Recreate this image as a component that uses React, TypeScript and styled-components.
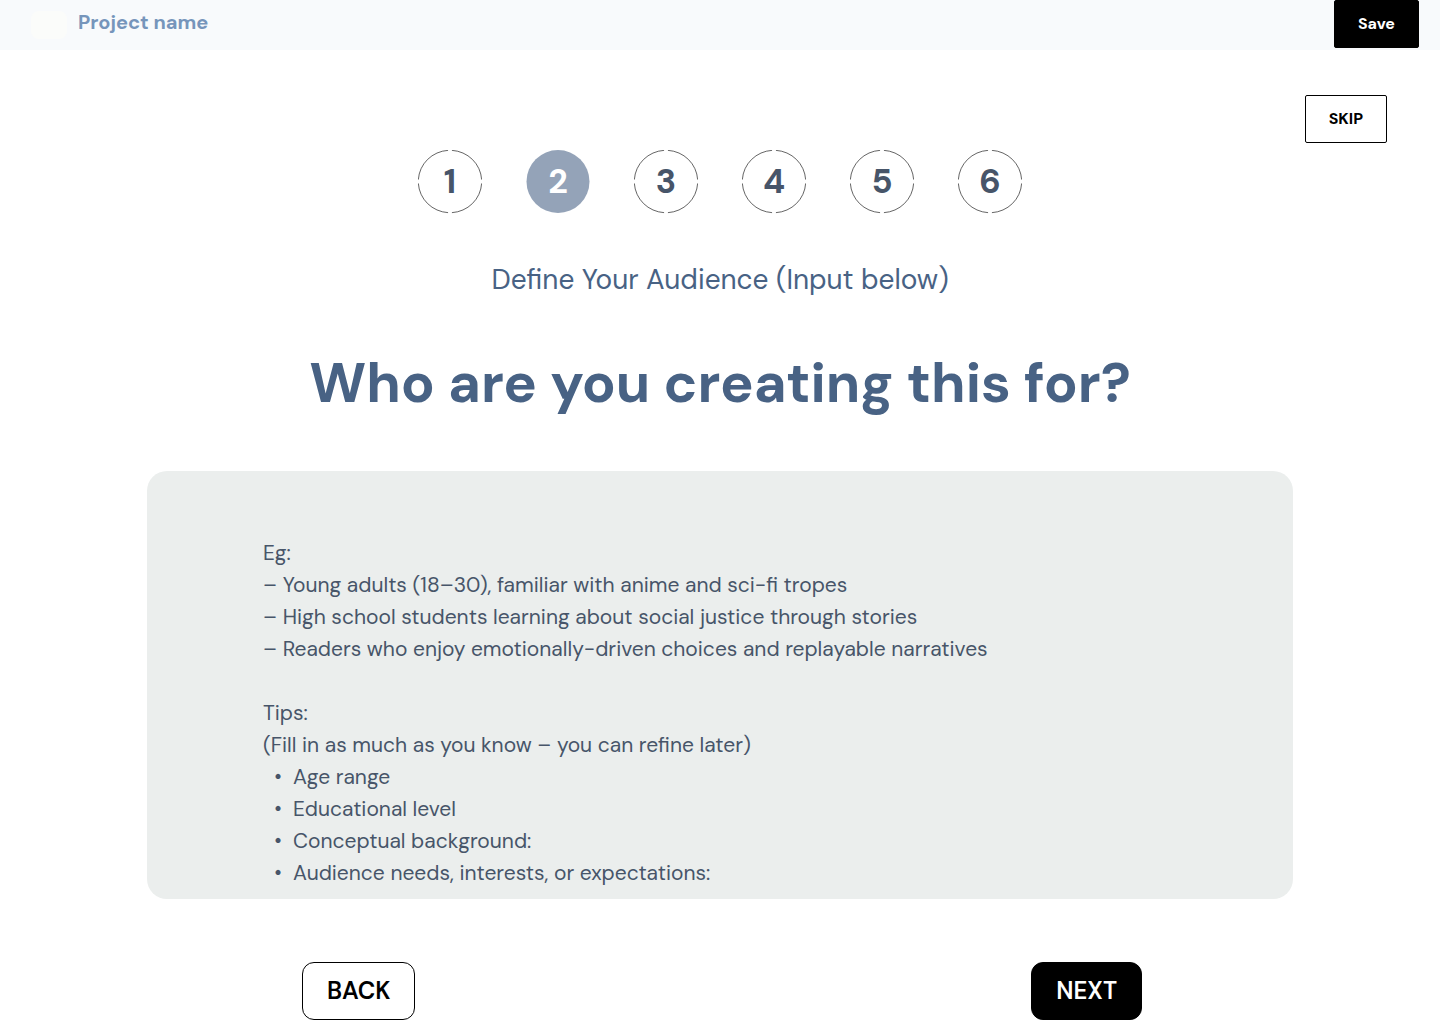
import React, { useState } from "react";
import styled, { createGlobalStyle } from "styled-components";

const GlobalStyle = createGlobalStyle`
  *, *::before, *::after { box-sizing: border-box; }
  body {
    margin: 0;
    background: #fff;
    font-family: "DM Sans", Inter, "Liberation Sans", sans-serif;
  }
  button, textarea { font: inherit; }
`;

const Header = styled.header`
  display: flex;
  align-items: flex-start;
  justify-content: space-between;
  height: 50px;
  padding: 0 21px 0 31px;
  background: #f8fafc;
`;

const Brand = styled.div`
  display: flex;
  align-items: center;
  gap: 11px;
`;

const Logo = styled.span`
  width: 36px;
  height: 28px;
  margin-top: 6px;
  border-radius: 8px;
  background: #fbfcfa;
`;

const ProjectName = styled.span`
  color: #7695bb;
  font-size: 20px;
  font-weight: 700;
  line-height: 44px;
`;

const Button = styled.button<{ $filled?: boolean; $large?: boolean }>`
  height: ${(p) => (p.$large ? 58 : 48)}px;
  padding: 0 ${(p) => (p.$large ? 24 : 23)}px 2px;
  border: 1px solid #000;
  border-radius: ${(p) => (p.$large ? 12 : 2)}px;
  background: ${(p) => (p.$filled ? "#000" : "#fff")};
  color: ${(p) => (p.$filled ? "#fff" : "#000")};
  font-size: ${(p) => (p.$large ? 24 : 16)}px;
  font-weight: ${(p) => (p.$large ? 600 : 700)};
  cursor: pointer;
`;

const Main = styled.main`
  display: flex;
  flex-direction: column;
  padding-top: 45px;
`;

const SkipRow = styled.div`
  display: flex;
  justify-content: flex-end;
  padding-right: 53px;
`;

const Steps = styled.ol`
  display: flex;
  justify-content: center;
  gap: 44px;
  margin: 7px 0 0;
  padding: 0;
  list-style: none;
`;

const Step = styled.li<{ $active: boolean }>`
  display: grid;
  place-items: center;
  width: 64px;
  height: 64px;
  color: ${(p) => (p.$active ? "#fff" : "#475569")};
  font-size: 34px;
  font-weight: 700;
  line-height: 40px;

  > * { grid-area: 1 / 1; }
`;

const StepNumber = styled.span`
  z-index: 1;
`;

const Subtitle = styled.p`
  margin: 46px 0 0;
  color: #486284;
  font-size: 28px;
  line-height: 40px;
  text-align: center;
`;

const Title = styled.h1`
  margin: 43px 0 0;
  color: #486284;
  font-size: 56px;
  font-weight: 700;
  line-height: 80px;
  text-align: center;
`;

const FieldRow = styled.div`
  display: flex;
  margin-top: 48px;
  padding: 0 147px;
`;

const Field = styled.textarea`
  flex: 1;
  min-width: 0;
  padding: 66px 116px 10px;
  border: 0;
  border-radius: 20px;
  background: #ebeeed;
  color: #475569;
  font-size: 21px;
  line-height: 32px;
  resize: none;
  overflow: hidden;
`;

const Actions = styled.nav`
  display: flex;
  justify-content: space-between;
  padding: 63px 298px 10px 302px;
`;

const steps = [1, 2, 3, 4, 5, 6];

const example = `Eg:
– Young adults (18–30), familiar with anime and sci-fi tropes
– High school students learning about social justice through stories
– Readers who enjoy emotionally-driven choices and replayable narratives

Tips:
(Fill in as much as you know – you can refine later)
  •  Age range
  •  Educational level
  •  Conceptual background:
  •  Audience needs, interests, or expectations:`;

function Ring({ active }: { active: boolean }) {
  return (
    <svg width="64" height="64" viewBox="0 0 64 64" aria-hidden="true">
      {active ? (
        <circle cx="32" cy="31.5" r="31.5" fill="#94a3b8" />
      ) : (
        <ellipse
          cx="32"
          cy="31.5"
          rx="31.7"
          ry="31.2"
          fill="none"
          stroke="#222"
          strokeWidth="0.7"
          pathLength="100"
          strokeDasharray="23 2"
          strokeDashoffset="-1"
        />
      )}
    </svg>
  );
}

export default function App() {
  const [audience, setAudience] = useState(example);
  const current = 2;

  return (
    <>
      <GlobalStyle />
      <Header>
        <Brand>
          <Logo />
          <ProjectName>Project name</ProjectName>
        </Brand>
        <Button type="button" $filled>Save</Button>
      </Header>
      <Main>
        <SkipRow>
          <Button type="button">SKIP</Button>
        </SkipRow>
        <Steps>
          {steps.map((n) => (
            <Step key={n} $active={n === current} aria-current={n === current ? "step" : undefined}>
              <Ring active={n === current} />
              <StepNumber>{n}</StepNumber>
            </Step>
          ))}
        </Steps>
        <Subtitle>Define Your Audience (Input below)</Subtitle>
        <Title id="question">Who are you creating this for?</Title>
        <FieldRow>
          <Field
            aria-labelledby="question"
            rows={11}
            spellCheck={false}
            value={audience}
            onChange={(e) => setAudience(e.target.value)}
          />
        </FieldRow>
        <Actions>
          <Button type="button" $large>BACK</Button>
          <Button type="button" $large $filled>NEXT</Button>
        </Actions>
      </Main>
    </>
  );
}
